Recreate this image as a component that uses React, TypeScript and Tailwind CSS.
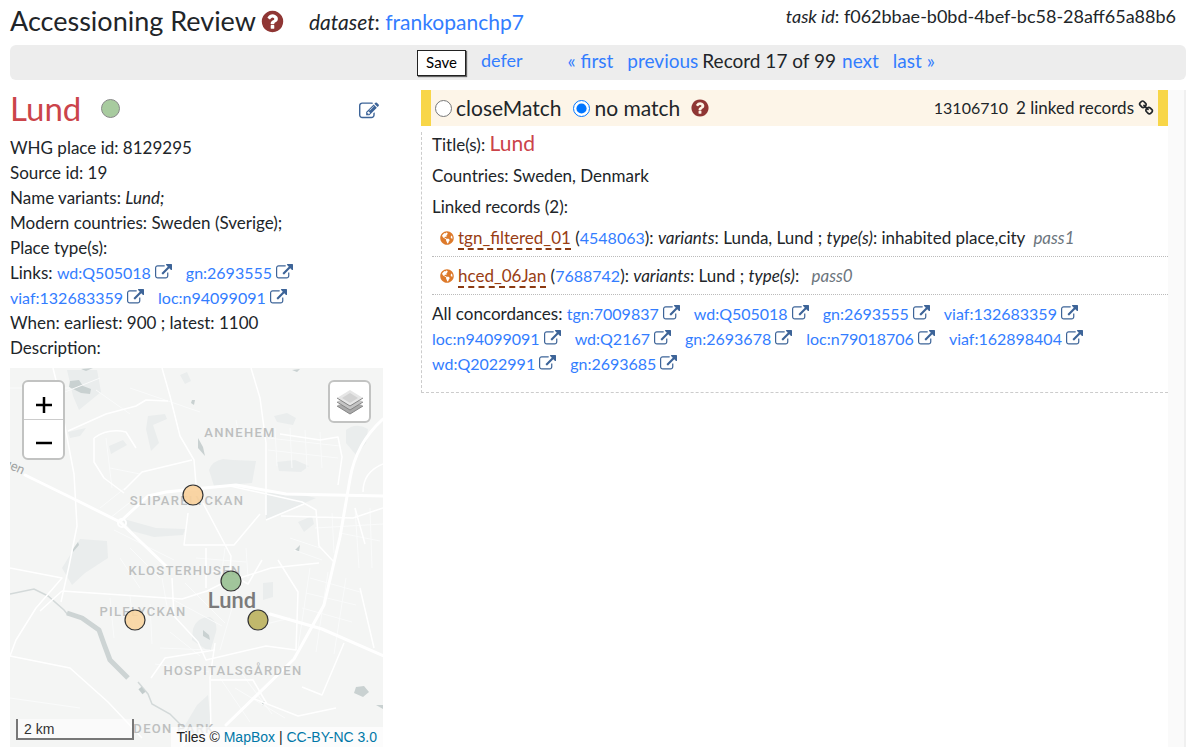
import React, { ReactNode } from "react";
import { FaGlobeAmericas } from "react-icons/fa";

const PATHS = {
  external:
    "M1408 928v320q0 119-84.5 203.5t-203.5 84.5h-832q-119 0-203.5-84.5t-84.5-203.5v-832q0-119 84.5-203.5t203.5-84.5h704q14 0 23 9t9 23v64q0 14-9 23t-23 9h-704q-66 0-113 47t-47 113v832q0 66 47 113t113 47h832q66 0 113-47t47-113v-320q0-14 9-23t23-9h64q14 0 23 9t9 23zM1792 64v512q0 26-19 45t-45 19-45-19l-176-176-652 652q-10 10-23 10t-23-10l-114-114q-10-10-10-23t10-23l652-652-176-176q-19-19-19-45t19-45 45-19h512q26 0 45 19t19 45z",
  edit:
    "M888 1184l116-116-152-152-116 116v56h96v96h56zm440-720q-16-16-33 1l-350 350q-17 17-1 33t33-1l350-350q17-17 1-33zm80 594v190q0 119-84.5 203.5t-203.5 84.5h-832q-119 0-203.5-84.5t-84.5-203.5v-832q0-119 84.5-203.5t203.5-84.5h832q63 0 117 25 15 7 18 23 3 17-9 29l-49 49q-14 14-32 8-23-6-45-6h-832q-66 0-113 47t-47 113v832q0 66 47 113t113 47h832q66 0 113-47t47-113v-126q0-13 9-22l64-64q15-15 35-7t20 29zm-96-738l288 288-672 672h-288v-288zm444 132l-92 92-288-288 92-92q28-28 68-28t68 28l152 152q28 28 28 68t-28 68z",
  link:
    "M1520 1216q0-40-28-68l-208-208q-28-28-68-28-42 0-72 32 3 3 19 18.5t21.5 21.5 15 19 13 25.5 3.5 27.5q0 40-28 68t-68 28q-15 0-27.5-3.5t-25.5-13-19-15-21.5-21.5-18.5-19q-33 31-33 73 0 40 28 68l206 207q27 27 68 27 40 0 68-26l147-146q28-28 28-67zm-703-705q0-40-28-68l-206-207q-28-28-68-28-39 0-68 27l-147 146q-28 28-28 67 0 40 28 68l208 208q27 27 68 27 42 0 72-31-3-3-19-18.5t-21.5-21.5-15-19-13-25.5-3.5-27.5q0-40 28-68t68-28q15 0 27.5 3.5t25.5 13 19 15 21.5 21.5 18.5 19q33-31 33-73zm895 705q0 120-85 203l-147 146q-83 83-203 83-121 0-204-85l-206-207q-83-83-83-203 0-123 88-209l-88-88q-86 88-208 88-120 0-204-84l-208-208q-84-84-84-204t85-203l147-146q83-83 203-83 121 0 204 85l206 207q83 83 83 203 0 123-88 209l88 88q86-88 208-88 120 0 204 84l208 208q84 84 84 204z",
  question:
    "M1024 1376v-192q0-14-9-23t-23-9h-192q-14 0-23 9t-9 23v192q0 14 9 23t23 9h192q14 0 23-9t9-23zm256-672q0-88-55.5-163t-138.5-116-170-41q-243 0-371 213-15 24 8 42l132 100q7 6 19 6 16 0 25-12 53-68 86-92 34-24 86-24 48 0 85.5 26t37.5 59q0 38-20 61t-68 45q-63 28-115.5 86.5t-52.5 125.5v36q0 14 9 23t23 9h192q14 0 23-9t9-23q0-19 21.5-49.5t54.5-49.5q32-18 49-28.5t46-35 44.5-48 28-60.5 12.5-81zm384 192q0 209-103 385.5t-279.5 279.5-385.5 103-385.5-103-279.5-279.5-103-385.5 103-385.5 279.5-279.5 385.5-103 385.5 103 279.5 279.5 103 385.5z",
};

function Icon({ name, className }: { name: keyof typeof PATHS; className: string }) {
  return (
    <svg viewBox="0 0 1792 1792" fill="currentColor" aria-hidden="true" className={className}>
      <path d={PATHS[name]} />
    </svg>
  );
}

function A({ children, className = "" }: { children: ReactNode; className?: string }) {
  return (
    <a href="#" className={"text-[#337dff] " + className}>
      {children}
    </a>
  );
}

function Concordances({ label, ids }: { label: string; ids: string[] }) {
  return (
    <div className="leading-[25px]">
      {label}{" "}
      {ids.map((id) => (
        <span key={id} className="mr-3.5 inline-block whitespace-nowrap text-[16px]">
          <A>
            {id}
            <Icon name="external" className="ml-1 inline-block size-[17px] align-[-2px] text-[#3d6498]" />
          </A>
        </span>
      ))}
    </div>
  );
}

function LinkedRecord(p: { name: string; id: string; variants: string; types: string; pass: string }) {
  return (
    <li className="border-b border-dotted border-[#bbb] pl-2 leading-[37px]">
      <FaGlobeAmericas className="mr-1 inline size-[14px] align-[-1px] text-[#dd7a2b]" />
      <a href="#" className="border-b-2 border-dashed border-[#8b3a12] text-[#993d14]">
        {p.name}
      </a>{" "}
      (<A className="text-[16px]">{p.id}</A>): <i>variants</i>: {p.variants} ; <i>type(s)</i>: {p.types}
      <i className="ml-2 text-[#6c757d]">{p.pass}</i>
    </li>
  );
}

const MAP_LABELS: [string, number, number][] = [
  ["ANNEHEM", 230, 69],
  ["SLIPARELYCKAN", 177, 137],
  ["KLOSTERHUSEN", 175, 207],
  ["PILELYCKAN", 133, 248],
  ["HOSPITALSGÅRDEN", 223, 307],
  ["DEON PARK", 164, 365],
];

function MapPicture() {
  return (
    <svg viewBox="0 0 373 379" preserveAspectRatio="xMidYMid slice" className="h-full w-full" role="img" aria-label="Map of Lund">
      <rect width="373" height="379" fill="#f4f5f4" />
      <g fill="#eaeded">
        <path d="M199 102q3-9 14-11l10 1 23 1-4 22-38 3zM256 125h28l22 5-18 8-32 14zM336 62q10-8 22-1l-2 14-10 12-10-12zM70 171l27 2 1 17-23 15-13 12-10-17zM183 261q4-12 17-12 8 5 6 15l-6 20-18-12zM187 337l11-10 3 30-12 12-18-5zM57 2h30l4 22-22 18-6-14z" />
        <path d="M138 48l17-2 2 5-14 6 6 18-8 8-5-22zM99 78l14-6 4 5-16 9zM264 48l13-3 9 5-3 7-16-3zM267 94l18-2 14 6-8 6-22-1zM170 7l7-3 4 9-6 3zM253 215l10-1v15l-10 3zM110 150l36 10 29 1-2 6-29 2-22-6zM58 64l18-4-6 8-10 2zM288 154l14-6 2 8-10 8z" />
      </g>
      <g fill="#c9d1d1">
        <path d="M60 13l9-1 4 6 8 3-1 5-9-1-12-6zM71 1l12-1-7 3zM188 70l5 9 2 9-7-8zM282 2l8-1-3 3zM182 32l3 0-1 5-3-2zM63 181l5-7 1 3-6 7zM285 182l5-5-1 7zM193 262l6 5 1 5-7-4zM346 319l8-1 5 6-6 5-9-4zM366 337h7v4zM252 335l3-3-2 6z" />
      </g>
      <path d="M0 226l24-5 14 7 16 14 4 5M128 314l10 12 4 10 18 10 14 14" fill="none" stroke="#d3d9d9" strokeWidth="1.500" />
      <path d="M57 245l15 5 17 12 5 14 6 16 18 18" fill="none" stroke="#cdd4d4" strokeWidth="5" strokeLinejoin="round" />
      <path d="M130 320l4 5" stroke="#c3cccc" strokeWidth="4" />
      <g fill="none" stroke="#fafbfb" strokeWidth="1">
        <path d="M90 140l25-20M100 150l28-22M104 162l60 30M120 20l70 24M258 70l72 8M258 82l70 8M265 60l2 38M280 60l2 40M295 62l2 38M310 64l2 36M0 20h60M220 60l34 5M226 52l4 20M86 22l34 24M100 100l30 6M96 70l6 50M300 210l50 14M296 225l50 12M292 240l50 14M300 200l-12 80M318 204l-12 80M336 210l-12 76M175 215l40 40M160 230l52 28M230 212l-20 70M240 260l40-10M160 264l30 24M150 280l50 2M145 296l54 8M210 310l30 44M225 320l50 30M232 306l30 40M100 230l4 40M120 228l4 34M140 236l2 40M152 210l6 34M0 330l70 10M40 30l50-20" />
        <path d="M305 160l68-4M322 145l2 40M345 140l4 60M360 140l2 60M330 165l40 8M280 170l30 10M284 182l28 10M186 190l50 4M200 204l30-2M215 180l-4 30M236 180l2 30M110 190l20 30M120 180l30 30" />
      </g>
      <g fill="none" stroke="#ffffff" strokeWidth="1.500" strokeLinejoin="round">
        <path d="M43 0l5 20 8 44 8 42 3 52-8 40-8 36M58 63l38-17 30-8 10-6 22 1M152 0l8 28 10 40 14 24 2 24M84 70q14-10 32-6l10 16M84 70v24l10 16 20 15M114 122l18-18 50-12M241 0l9 30 6 45v72M270 66l40 6 18-3 4 20-4 28M220 118l72 16 14 8 3 36 15 16M373 96q-20 8-20 28M256 152l38-16M0 200l52 10-26 30-20 32-6 16M52 223l120 8 25-8 14-7 50-16 48-5M30 243l22-20M178 145l-4 32h50l26-31M193 135l28 53-1 18 18 10 14-24M162 210l2 38 24 26 8 18 60-14 30 4 2-58-20-32M196 180v40M205 275l-5 35 1 60M0 288l60 12 38 34 34 36M201 312l42 0 14 24M141 310l14-20 50-8M334 275l-22 52-20-8M242 330l46 18 38-8M373 140l-30 10-72-2M345 140l10 36M350 220l14 60" />
      </g>
      <g fill="none" stroke="#ffffff" strokeLinejoin="round" strokeLinecap="round">
        <path d="M15 107l47 23 48 24 46 44M112 152l26-24 18-4 38-4 32-3 50 9 97 2" strokeWidth="3" />
        <path d="M373 51q-27 24-33 60l-10 58-16 68-30 54-68 66" strokeWidth="3" />
        <path d="M260 246l52 15 62 27" strokeWidth="3" />
        <path d="M172 379l4-4" strokeWidth="2" />
        <circle cx="112" cy="155" r="4" strokeWidth="2" />
      </g>
      <g fill="#bdbfbf" fontFamily="Roboto, sans-serif" fontSize="13" fontWeight="500" letterSpacing="1.300" textAnchor="middle">
        {MAP_LABELS.map(([text, x, y]) => (
          <text key={text} x={x} y={y}>
            {text}
          </text>
        ))}
      </g>
      <text x="222" y="240" fill="#7b7b7b" fontFamily="Roboto, sans-serif" fontSize="22" fontWeight="500" textAnchor="middle">
        Lund
      </text>
      <text x="-7" y="101" transform="rotate(24 0 99)" fill="#a3a5a5" fontFamily="Roboto, sans-serif" fontSize="13">
        gen
      </text>
      <g stroke="#333" strokeWidth="1.200">
        <circle cx="183" cy="127" r="10" fill="#fad09a" fillOpacity=".9" />
        <circle cx="125" cy="252" r="10" fill="#fad5a0" fillOpacity=".9" />
        <circle cx="221" cy="213" r="10" fill="#98c091" fillOpacity=".9" />
        <circle cx="248" cy="252" r="10" fill="#beb464" fillOpacity=".95" />
      </g>
    </svg>
  );
}

function PlaceMap() {
  return (
    <div className="relative h-[379px] overflow-hidden font-['Liberation_Sans',Arial,sans-serif]">
      <MapPicture />
      <div className="absolute left-3 top-3 flex w-[43px] flex-col rounded-md border-2 border-[#c2c3c2] bg-white text-black">
        <button type="button" aria-label="Zoom in" className="flex h-[38px] items-center justify-center border-b border-[#ccc]">
          <svg viewBox="0 0 16 16" className="mt-2 size-4 stroke-black stroke-[2.500]" aria-hidden="true">
            <path d="M0 8h16M8 0v16" />
          </svg>
        </button>
        <button type="button" aria-label="Zoom out" className="flex h-[38px] items-center justify-center">
          <svg viewBox="0 0 16 16" className="mt-2 size-4 stroke-black stroke-[2.500]" aria-hidden="true">
            <path d="M0 8h16" />
          </svg>
        </button>
      </div>
      <button
        type="button"
        aria-label="Layers"
        className="absolute right-3 top-3 flex size-[43px] items-center justify-center rounded-md border-2 border-[#c2c3c2] bg-white"
      >
        <svg viewBox="0 0 26 26" className="size-[26px]" aria-hidden="true">
          <path d="M0 17l13 8 13-8-2-1.500H2z" fill="#a9a9a9" />
          <path d="M0 17l13 8 13-8" fill="none" stroke="#858585" />
          <path d="M0 13l13 8 13-8-2-1.500H2z" fill="#c4c4c4" />
          <path d="M0 13l13 8 13-8" fill="none" stroke="#858585" />
          <path d="M0 9l13-8 13 8-13 8z" fill="#e6e6e6" />
          <path d="M5 9l8-5 8 5-8 5z" fill="#d2d2d2" />
          <path d="M0 9l13 8 13-8" fill="none" stroke="#858585" />
        </svg>
      </button>
      <div className="absolute bottom-[7px] left-1.5 h-[21px] w-[118px] border-2 border-t-0 border-[#777] bg-white/50 px-1.5 text-sm leading-[20px] text-[#333]">
        2 km
      </div>
      <div className="absolute bottom-0 right-0 whitespace-nowrap bg-white/70 px-1.5 text-sm leading-[20px] text-[#222]">
        Tiles ©{" "}
        <a href="#" className="text-[#0078a8]">
          MapBox
        </a>{" "}
        |{" "}
        <a href="#" className="text-[#0078a8]">
          CC-BY-NC 3.0
        </a>
      </div>
    </div>
  );
}

export default function App() {
  return (
    <div className="bg-white pl-2.5 pr-3.5 font-[Lato,sans-serif] text-[17px] text-[#212529]">
      <header className="flex h-[45px] items-start justify-between">
        <div className="flex items-center leading-[40px]">
          <h1 className="text-[27px]">Accessioning Review</h1>
          <Icon name="question" className="ml-1 size-[25px] text-[#8f3634]" />
          <p className="ml-6 pt-0.5 text-[21px]">
            <i>dataset</i>: <A>frankopanchp7</A>
          </p>
        </div>
        <p className="mr-2.5 text-[18px] leading-[32px]">
          <i>task id</i>: f062bbae-b0bd-4bef-bc58-28aff65a88b6
        </p>
      </header>

      <nav className="flex h-[35px] items-center rounded-md bg-[#ededed] pl-[407px] text-[19px] leading-[31px]">
        <button type="button" className="h-[26px] w-[49px] border border-[#222] bg-white text-[15px] leading-none text-black shadow-[1px_1px_1px_#666]">
          Save
        </button>
        <div className="flex pb-1">
          <A className="ml-[15px] text-[18px]">defer</A>
          <A className="ml-[45px]">« first</A>
          <A className="ml-3.5">previous</A>
          <span className="ml-1">Record 17 of 99</span>
          <A className="ml-1.5">next</A>
          <A className="ml-3.5">last »</A>
        </div>
      </nav>

      <main className="mt-2.5 flex items-stretch">
        <section className="w-[373px] shrink-0">
          <div className="flex h-[45px] items-center pb-2">
            <h2 className="text-[33px] leading-[37px] text-[#cb444a]">Lund</h2>
            <span className="ml-5 size-[19px] rounded-full border border-[#888] bg-[#a8cb9f]" />
            <a href="#" aria-label="Edit" className="ml-auto mr-1 mt-1 text-[#3d6498]">
              <Icon name="edit" className="size-5" />
            </a>
          </div>
          <div className="leading-[25px]">
            <p>WHG place id: 8129295</p>
            <p>Source id: 19</p>
            <p>
              Name variants: <i>Lund;</i>
            </p>
            <p>Modern countries: Sweden (Sverige);</p>
            <p>Place type(s):</p>
            <Concordances label="Links:" ids={["wd:Q505018", "gn:2693555", "viaf:132683359", "loc:n94099091"]} />
            <p>When: earliest: 900 ; latest: 1100</p>
            <p>Description:</p>
          </div>
          <div className="mt-2">
            <PlaceMap />
          </div>
        </section>

        <section className="ml-[38px] min-w-0 flex-1 border-r-2 border-[#f0f0f0] bg-[#fafafa] pr-4">
          <div className="h-full bg-white">
            <div className="flex h-9 items-center border-x-10 border-[#f8d648] bg-[#fdf5e8] pl-1 pr-1">
              <label className="flex items-center text-[21px]">
                <input type="radio" name="match" className="mr-1 size-[17px]" />
                closeMatch
              </label>
              <label className="ml-3 flex items-center text-[21px]">
                <input type="radio" name="match" defaultChecked className="mr-1 size-[17px]" />
                no match
              </label>
              <Icon name="question" className="ml-2.5 size-5 text-[#8f3634]" />
              <span className="ml-auto text-[16px]">13106710</span>
              <span className="ml-2">2 linked records</span>
              <Icon name="link" className="ml-1 size-4" />
            </div>
            <div className="border-b border-l border-dashed border-[#ccc] pb-4 pl-2.5">
              <p className="mt-1.5 leading-[25px]">
                Title(s): <span className="text-[21px] leading-none text-[#cb444a]">Lund</span>
              </p>
              <p className="mt-1.5 leading-[25px]">Countries: Sweden, Denmark</p>
              <p className="mt-1.5 leading-[25px]">Linked records (2):</p>
              <ul>
                <LinkedRecord name="tgn_filtered_01" id="4548063" variants="Lunda, Lund" types="inhabited place,city" pass="pass1" />
                <LinkedRecord name="hced_06Jan" id="7688742" variants="Lund" types="" pass="pass0" />
              </ul>
              <div className="pr-16 pt-1.5">
                <Concordances
                  label="All concordances:"
                  ids={[
                    "tgn:7009837",
                    "wd:Q505018",
                    "gn:2693555",
                    "viaf:132683359",
                    "loc:n94099091",
                    "wd:Q2167",
                    "gn:2693678",
                    "loc:n79018706",
                    "viaf:162898404",
                    "wd:Q2022991",
                    "gn:2693685",
                  ]}
                />
              </div>
            </div>
          </div>
        </section>
      </main>
    </div>
  );
}
